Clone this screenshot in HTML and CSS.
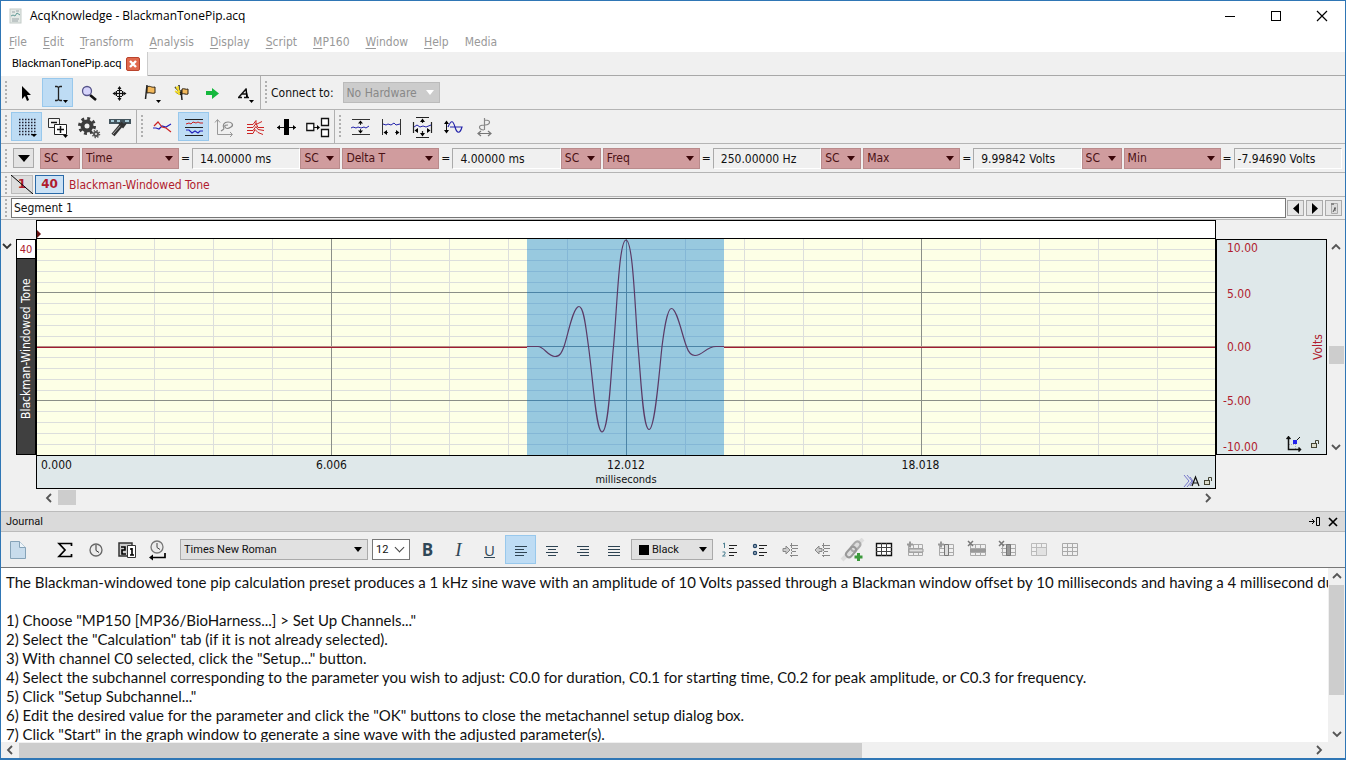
FILE: index.html
```
<!DOCTYPE html>
<html lang="en">
<head>
<meta charset="utf-8">
<title>AcqKnowledge - BlackmanTonePip.acq</title>
<link rel="stylesheet" href="styles.css">
</head>
<body>
<div class="window">
  <header class="titlebar">
    <svg class="app-icon" width="14" height="16" viewBox="0 0 14 16"><rect x="1" y="1" width="11" height="14" fill="#e4e9e6" stroke="#c3cbc8"/><path d="M3 4h3M7 3h3M3 11h7M3 13h6" stroke="#9aa5a8"/><path d="M2 8l2-1 2 1 2-3 3 2" fill="none" stroke="#5f9a96"/></svg>
    <h1 class="title">AcqKnowledge - BlackmanTonePip.acq</h1>
    <button class="win-btn" aria-label="Minimize"><svg width="12" height="12"><path d="M1 6.500h10" stroke="#000"/></svg></button>
    <button class="win-btn" aria-label="Maximize"><svg width="12" height="12"><rect x="1.500" y="1.500" width="9" height="9" fill="none" stroke="#000"/></svg></button>
    <button class="win-btn" aria-label="Close"><svg width="12" height="12"><path d="M1 1l10 10M11 1L1 11" stroke="#000" stroke-width="1.200"/></svg></button>
  </header>
  <nav class="menubar">
    <button><u>F</u>ile</button><button><u>E</u>dit</button><button><u>T</u>ransform</button><button><u>A</u>nalysis</button><button><u>D</u>isplay</button><button><u>S</u>cript</button><button><u>M</u>P160</button><button><u>W</u>indow</button><button><u>H</u>elp</button><button>Media</button>
  </nav>
  <div class="tabs">
    <div class="tab"><span>BlackmanTonePip.acq</span><button class="tab-close" aria-label="Close tab"><svg width="14" height="14"><rect x=".5" y=".5" width="13" height="13" rx="1.500" fill="#e0694d" stroke="#b9432c"/><path d="M4 4l6 6M10 4l-6 6" stroke="#fff" stroke-width="2.400"/></svg></button></div>
  </div>

  <div class="toolbar">
    <div class="group">
      <i class="grip"></i>
      <button class="tool" aria-label="Select"><svg width="24" height="24"><path d="M7 5v13l3-3 2 5 2-1-2-5h4z" fill="#000"/></svg></button>
      <button class="tool on" aria-label="I-beam"><svg width="24" height="24"><path d="M9 5.500h2l1.500 1 1.500-1h2M12.500 6v13M9 19.500h2l1.500-1 1.500 1h2" fill="none" stroke="#222" stroke-width="1.300"/><path d="M17 19h5l-2.500 3z" fill="#000"/></svg></button>
      <button class="tool" aria-label="Zoom"><svg width="24" height="24"><path d="M13 14l6 5" stroke="#111" stroke-width="2.600"/><circle cx="10" cy="10" r="4.500" fill="#d6d4fb" stroke="#555389" stroke-width="1.300"/></svg></button>
      <button class="tool" aria-label="Grid align"><svg width="24" height="24"><path d="M11.500 6v13M5 12.500h13M8.500 10v5M14.500 10v5M9 9.500h5M9 15.500h5" stroke="#111" stroke-width="1.200"/><path d="M11.500 5l2 3h-4zM11.500 20l2-3h-4zM4.500 12.500l3-2v4zM18.500 12.500l-3-2v4z" fill="#111"/></svg></button>
      <button class="tool" aria-label="Event"><svg width="24" height="24"><path d="M8 6c3-2 4 1 8 0v6c-3 1-5-1-8 0z" fill="#f3b95c" stroke="#2c2112"/><path d="M8 4L6.500 18" stroke="#222" stroke-width="1.500"/><path d="M17 19h5l-2.500 3z" fill="#000"/></svg></button>
      <button class="tool" aria-label="Event marker"><svg width="24" height="24"><path d="M5 6l6 6M9 4v6l3 2M6 11l6 3M12 19l-1-10" stroke="#222" stroke-width="1.500" fill="none"/><path d="M6 6l4 5M8 5l1 9M5 10l5 3" stroke="#f5dd29" stroke-width="1.500"/><path d="M12 8c2-1 4 1 6 0v5c-2 1-4-1-6 0z" fill="#f3b95c" stroke="#2c2112"/></svg></button>
      <button class="tool" aria-label="Go"><svg width="24" height="24"><path d="M5 10h6V7l7 5.500-7 5.500v-4H5z" fill="#15b83d"/></svg></button>
      <button class="tool" aria-label="Annotate"><svg width="24" height="24"><path d="M6 16.500h4M12 16.500h5M7 16l7.500-8.500M14 8l1 8M10 13h5" stroke="#111" fill="none" stroke-width="1.500"/><path d="M14 7l2 9h-2z"/><path d="M17 19h5l-2.500 3z"/></svg></button>
    </div>
    <div class="group">
      <i class="grip"></i>
      <label class="connect" for="hw">Connect to:</label>
      <span class="combo combo-off"><select id="hw" disabled><option>No Hardware</option></select></span>
    </div>
  </div>

  <div class="toolbar">
    <div class="group">
      <i class="grip"></i>
      <button class="tool on" aria-label="Grid"><svg width="24" height="24"><path d="M4 4.500h17M4 7.500h17M4 10.500h17M4 13.500h17M4 16.500h17M4 19.500h17" stroke="#223" stroke-width="1.500" stroke-dasharray="1.500 1.500" fill="none"/><path d="M16 19h6l-3 3z"/></svg></button>
      <button class="tool" aria-label="Overlap"><svg width="24" height="24"><path d="M2.500 3.500h11v9h-11z" fill="#f4f4f4" stroke="#333"/><path d="M8.500 9.500h12v10h-12z" fill="#fff" stroke="#222"/><path d="M5 7.500h6M11 14.500h7M14.500 11v7" stroke="#111" stroke-width="1.500"/><path d="M17 20h5l-2.500 3z"/></svg></button>
      <button class="tool" aria-label="Settings"><svg width="26" height="24"><circle cx="11" cy="11" r="4.500" fill="none" stroke="#3c3c3c" stroke-width="4"/><circle cx="11" cy="11" r="7.500" fill="none" stroke="#3c3c3c" stroke-width="3" stroke-dasharray="2.900 2.990"/><circle cx="20" cy="19" r="2" fill="none" stroke="#555" stroke-width="2"/><circle cx="20" cy="19" r="3.500" fill="none" stroke="#555" stroke-width="1.500" stroke-dasharray="1.300 1.450"/></svg></button>
      <button class="tool" aria-label="Tools"><svg width="26" height="24"><path d="M2 4h22v5H2z" fill="#43545d"/><path d="M4 5h3v2H4zM10 5h3v2h-3zM18 5h4v2h-4z" fill="#a8cbd8"/><path d="M6 20L16 8" stroke="#333" stroke-width="4"/><path d="M6 19l8-9" stroke="#aaa"/><path d="M12 8l4 4 3-4" fill="none" stroke="#333" stroke-width="2"/></svg></button>
    </div>
    <div class="group">
      <i class="grip"></i>
      <button class="tool" aria-label="Overlay"><svg width="24" height="24"><path d="M2 13h3l3 1 3-3 4 1 5-3" fill="none" stroke="#22b" stroke-width="1.200"/><path d="M3 11l4-4 4 5 4 1 5 4" fill="none" stroke="#c22" stroke-width="1.200"/></svg></button>
      <button class="tool on" aria-label="Stacked"><svg width="24" height="24"><path d="M3 4.500h18M3 12.500h18M3 20.500h18" stroke="#222" stroke-width="1.200"/><path d="M4 9l3-1 2 1 2-2 3 1 2-1 2 1h3" fill="none" stroke="#c22"/><path d="M4 15h3l3 3 3-2 3 2 2-2h3" fill="none" stroke="#22b" stroke-width="1.200"/></svg></button>
      <button class="tool" aria-label="X/Y"><svg width="24" height="24"><path d="M4.500 5v14.500H19M2 7.500l2.500-3 2.500 3M17 17l2.500 2.500L17 22" fill="none" stroke="#999"/><path d="M8 16l3-2M11 14c-2-4 0-7 4-7s6 3 3 5-5 2-6 0 1-2 3-2" fill="none" stroke="#888" stroke-width="1.200"/></svg></button>
      <button class="tool" aria-label="Compare"><svg width="24" height="24"><path d="M3 9.500h6l3-4v4l6-3M3 12.500h6l3-4 2 4h6M3 15.500h6l3-4 2 3 6 1M3 18.500h6l2-4 3 3 5 2" fill="none" stroke="#c22"/></svg></button>
      <button class="tool" aria-label="Fit column"><svg width="24" height="24"><path d="M9 4h5v16H9z"/><path d="M2 12.500h7M14 12.500h7" stroke="#111"/><path d="M2 12.500l3-2.500v5zM21 12.500l-3-2.500v5z"/></svg></button>
      <button class="tool" aria-label="Split"><svg width="24" height="24"><path d="M.8 8.500h7v7h-7zM15.500 3.500h7v7h-7zM15.500 14.500h7v7h-7z" fill="#fff" stroke="#111" stroke-width="1.300"/><path d="M8 12.500h4" stroke="#111"/><path d="M11 10l3 2.500-3 2.500z"/></svg></button>
    </div>
    <div class="group">
      <i class="grip"></i>
      <button class="tool" aria-label="Autoscale vertical"><svg width="24" height="24"><path d="M3 4.500h18M3 19.500h18M11.500 7v3M11.500 14v3" stroke="#333"/><path d="M9 8.500l2.500-3 2.500 3zM9 15.500l2.500 3 2.500-3z"/><path d="M2 13l2-1 3 1 2-1 3 1 3-1 2 1 3-2" fill="none" stroke="#22a"/></svg></button>
      <button class="tool" aria-label="Autoscale horizontal"><svg width="24" height="24"><path d="M2.500 4v16M20.500 4v16M5 17.500h3M15 17.500h3" stroke="#333"/><path d="M7 15l-3.500 2.500L7 20zM16 15l3.500 2.500L16 20z"/><path d="M3 9l3 1 2-1 3 1 3-2 2 2 4-1" fill="none" stroke="#22a"/></svg></button>
      <button class="tool" aria-label="Autoscale both"><svg width="24" height="24"><path d="M5 2.500h13M5 22.500h13M2.500 7v11M20.500 7v11M11.500 5v3M11.500 16v4" stroke="#222" stroke-width="1.200"/><path d="M9 7l2.500-3.500L14 7zM9 18l2.500 3.500L14 18zM7 13l-3.500 2.500L7 18zM16 13l3.500 2.500L16 18z"/><path d="M3 12l3-2 3 2 3-1 3 1 5-2" fill="none" stroke="#22a"/></svg></button>
      <button class="tool" aria-label="Scale wave"><svg width="24" height="24"><path d="M4.500 7v10" stroke="#111"/><path d="M2 9l2.500-3.500L7 9zM2 15l2.500 3.500L7 15z"/><path d="M6 12c3-7 5-7 7 0s5 7 7 0H8" fill="none" stroke="#22a" stroke-width="1.200"/></svg></button>
      <button class="tool" aria-label="Rotate"><svg width="24" height="24"><path d="M11.500 3v12M11 15c-6-1-6-5 0-5M12 5c6 0 6 4 0 5" fill="none" stroke="#888" stroke-width="1.200"/><path d="M6 18.500h12M8 16l-3 2.500L8 21M15 16l3 2.500-3 2.500" fill="none" stroke="#777" stroke-width="1.200"/></svg></button>
    </div>
  </div>

  <div class="measures">
    <i class="grip"></i>
    <button class="drop" aria-label="Measurement options"><i class="tri"></i></button>
    <div class="measure-list">
      <div class="measure"><span class="combo red sc"><select aria-label="Channel"><option>SC</option></select></span><span class="combo red"><select aria-label="Measurement"><option>Time</option></select></span><b>=</b><output>14.00000 ms</output></div>
      <div class="measure"><span class="combo red sc"><select aria-label="Channel"><option>SC</option></select></span><span class="combo red"><select aria-label="Measurement"><option>Delta T</option></select></span><b>=</b><output>4.00000 ms</output></div>
      <div class="measure"><span class="combo red sc"><select aria-label="Channel"><option>SC</option></select></span><span class="combo red"><select aria-label="Measurement"><option>Freq</option></select></span><b>=</b><output>250.00000 Hz</output></div>
      <div class="measure"><span class="combo red sc"><select aria-label="Channel"><option>SC</option></select></span><span class="combo red"><select aria-label="Measurement"><option>Max</option></select></span><b>=</b><output>9.99842 Volts</output></div>
      <div class="measure"><span class="combo red sc"><select aria-label="Channel"><option>SC</option></select></span><span class="combo red"><select aria-label="Measurement"><option>Min</option></select></span><b>=</b><output class="tight">-7.94690 Volts</output></div>
    </div>
  </div>

  <div class="channels">
    <i class="grip"></i>
    <button class="chan">1<svg class="slash" viewBox="0 0 22 19" preserveAspectRatio="none"><path d="M0 0l22 19" stroke="#000"/></svg></button>
    <button class="chan chan-on">40</button>
    <span class="chan-name">Blackman-Windowed Tone</span>
  </div>

  <div class="segment">
    <i class="grip"></i>
    <input type="text" aria-label="Segment" value="Segment 1">
    <button class="seg-btn" aria-label="Previous"><svg width="12" height="14"><path d="M9 2v11L3 7.500z"/></svg></button>
    <button class="seg-btn" aria-label="Next"><svg width="12" height="14"><path d="M3 2v11l6-5.500z"/></svg></button>
    <button class="seg-btn" aria-label="Segment options"><svg width="12" height="14"><path d="M3.500 2.500h6v10h-6z" fill="#dcdcdc" stroke="#aaa"/><path d="M3 2h3v2H3z" fill="#888"/><path d="M5 11l2-4v3M6 7h2" fill="none" stroke="#555"/></svg></button>
  </div>

  <main class="graph">
    <div class="marker-bar"><svg width="5" height="9"><path d="M0 1l4 4-4 4z" fill="#611"/></svg></div>
    <button class="collapse" aria-label="Collapse"><svg width="10" height="8"><path d="M1 2l4 4 4-4" fill="none" stroke="#333" stroke-width="1.800"/></svg></button>
    <div class="chan-label"><span class="chan-num">40</span><span class="chan-title">Blackman-Windowed Tone</span></div>
    <div class="plot">
      <svg viewBox="1 0 1178 216" preserveAspectRatio="none">
        <rect width="1180" height="216" fill="#fdffe6"/>
        <g stroke="#dcdedc" shape-rendering="crispEdges">
          <path d="M0 10.500h1180M0 21.500h1180M0 32.500h1180M0 43.500h1180M0 64.500h1180M0 75.500h1180M0 86.500h1180M0 97.500h1180M0 118.500h1180M0 129.500h1180M0 140.500h1180M0 151.500h1180M0 172.500h1180M0 183.500h1180M0 194.500h1180M0 205.500h1180"/>
          <path d="M59.500 0v216M118.500 0v216M177.500 0v216M236.500 0v216M354.500 0v216M413.500 0v216M472.500 0v216M531.500 0v216M649.500 0v216M708.500 0v216M767.500 0v216M826.500 0v216M944.500 0v216M1003.500 0v216M1062.500 0v216M1121.500 0v216"/>
        </g>
        <path d="M0 53.500h1180M0 161.500h1180M295.500 0v216M590.500 0v216M885.500 0v216" stroke="#8b8f88" shape-rendering="crispEdges"/>
        <rect x="491" width="197" height="216" fill="#98c9df"/>
        <path d="M491 10.500h197M491 21.500h197M491 32.500h197M491 43.500h197M491 64.500h197M491 75.500h197M491 86.500h197M491 97.500h197M491 118.500h197M491 129.500h197M491 140.500h197M491 151.500h197M491 172.500h197M491 183.500h197M491 194.500h197M491 205.500h197M531.500 0v216M649.500 0v216" stroke="#84b7d6" shape-rendering="crispEdges"/>
        <path d="M491 53.500h197M491 107.500h197M491 161.500h197M590.500 0v216" stroke="#4c84a6" shape-rendering="crispEdges"/>
        <path d="M0 107h491v1H0zM688 107h492v1H688z" fill="#b58a84"/>
        <path d="M0 108h491v1H0zM688 108h492v1H688z" fill="#a01c30"/>
        <path d="M491 107.500H502C508 107.500 512 117.500 519 117.500C524 117.500 526 113 528 107.500C532 96 537 67.500 543 67.500C548 67.500 550 90 552.500 107.500C557 140 560 193 566 193C573 193 575 130 577.500 107.500C581 70 583 1 590 1C597 1 599 70 602 107.500C605 140 607 190.500 613 190.500C619 190.500 623 135 626 107.500C628 92 631 69.500 635.500 69.500C641 69.500 646 96 650.500 107.500C652 112 655 116.500 659 116.500C667 116.500 670 107.500 680 107.500H688" fill="none" stroke="#5b3a66" stroke-width="1.200"/>
      </svg>
    </div>
    <div class="volts">
      <span>10.00</span><span>5.00</span><span>0.00</span><span class="neg">-5.00</span><span class="neg">-10.00</span>
      <em class="unit">Volts</em>
      <div class="axis-icons"><svg width="16" height="16"><path d="M9 6L14 1" stroke="#111"/><path d="M3 8.500h5M9.500 8v6" stroke="#aab" stroke-dasharray="1 1"/><path d="M2.500 0v13.500H15M.5 3l2-2 2 2M12.500 11.500l2 2-2 2" stroke="#111" stroke-width="1.500" fill="none"/><rect x="7" y="4" width="4" height="4" fill="#22e"/></svg><svg width="10" height="10"><rect x="1.500" y="4.500" width="5" height="4" fill="#ddc" stroke="#443"/><path d="M5.500 4V1.500h3V5" fill="none" stroke="#443"/></svg></div>
    </div>
    <div class="vscroll"><svg width="10" height="8"><path d="M1 6l4-4 4 4" fill="none" stroke="#555" stroke-width="1.800"/></svg><i class="thumb"></i><svg width="10" height="8"><path d="M1 2l4 4 4-4" fill="none" stroke="#555" stroke-width="1.800"/></svg></div>
    <div class="time">
      <span>0.000</span><span>6.006</span><span>12.012</span><span>18.018</span>
      <em>milliseconds</em>
      <div class="time-icons"><svg width="18" height="14"><path d="M1 1l5 6-5 6M4 1l5 6-5 6M7 3l3 4-3 5" fill="none" stroke="#7777cc"/><path d="M9 12l3.500-9 3.500 9M10 9h5" fill="none" stroke="#111" stroke-width="1.200"/></svg><svg width="10" height="10"><rect x="1.500" y="4.500" width="5" height="4" fill="#ddc" stroke="#443"/><path d="M5.500 4V1.500h3V5" fill="none" stroke="#443"/></svg></div>
    </div>
    <div class="hscroll"><svg width="8" height="10"><path d="M6 1L2 5l4 4" fill="none" stroke="#555" stroke-width="1.800"/></svg><i class="thumb"></i><svg class="end" width="8" height="10"><path d="M2 1l4 4-4 4" fill="none" stroke="#555" stroke-width="1.800"/></svg></div>
  </main>

  <section class="journal">
    <header class="journal-head"><h2>Journal</h2><button aria-label="Dock"><svg width="12" height="11"><path d="M0 5.500h5M3 3l2.500 2.500L3 8" fill="none" stroke="#000"/><path d="M7.500 1.500h3v8h-3z" fill="none" stroke="#000"/></svg></button><button aria-label="Close journal"><svg width="10" height="10"><path d="M1 1l8 8M9 1L1 9" stroke="#000" stroke-width="1.700"/></svg></button></header>
    <div class="journal-tools">
      <button class="tool first" aria-label="New"><svg width="24" height="24"><path d="M4.500 3.500h9l6 6v11h-15z" fill="#c8dcec" stroke="#86a3b8"/><path d="M13.500 3.500v6h6" fill="#eef5fa" stroke="#86a3b8"/></svg></button>
      <button class="tool" aria-label="Sum"><svg width="24" height="24"><path d="M18.500 8V5.500H6L12 12l-6 6.500h12.500V16" fill="none" stroke="#000" stroke-width="1.700"/></svg></button>
      <button class="tool" aria-label="Time"><svg width="24" height="24"><circle cx="12" cy="12" r="6" fill="#ececec" stroke="#666" stroke-width="1.300"/><path d="M12 7v5.500l3 2" fill="none" stroke="#333"/></svg></button>
      <button class="tool" aria-label="Date"><svg width="24" height="24"><path d="M4 5h13v13H4z" fill="#ccc" stroke="#333" stroke-width="1.500"/><path d="M12.500 7.500h8v12h-8z" fill="#fff" stroke="#333"/><path d="M6 9h4v3H7v4h4M17 10v7M15 17h4M15 11h2" fill="none" stroke="#000" stroke-width="1.600"/></svg></button>
      <button class="tool" aria-label="Insert time"><svg width="24" height="24"><circle cx="11" cy="9" r="6" fill="#ececec" stroke="#777" stroke-width="1.300"/><path d="M11 5v4.500l3 2" fill="none" stroke="#444"/><path d="M5 19.500h14V15" fill="none" stroke="#000" stroke-width="1.700"/><path d="M3 19.500l4-3v6z"/></svg></button>
      <span class="combo font-name"><select aria-label="Font"><option>Times New Roman</option></select></span>
      <span class="combo font-size"><select aria-label="Size"><option>12</option></select></span>
      <button class="tool" aria-label="Bold"><b class="fmt">B</b></button>
      <button class="tool" aria-label="Italic"><i class="fmt it">I</i></button>
      <button class="tool" aria-label="Underline"><u class="fmt un">U</u></button>
      <button class="tool on" aria-label="Align left"><svg width="24" height="24"><path d="M6 8.500h12M6 11.500h9M6 14.500h12M6 17.500h9" stroke="#2e4352"/></svg></button>
      <button class="tool" aria-label="Align center"><svg width="24" height="24"><path d="M6 8.500h12M8 11.500h8M6 14.500h12M8 17.500h8" stroke="#2e4352"/></svg></button>
      <button class="tool" aria-label="Align right"><svg width="24" height="24"><path d="M6 8.500h12M9 11.500h9M6 14.500h12M9 17.500h9" stroke="#2e4352"/></svg></button>
      <button class="tool" aria-label="Justify"><svg width="24" height="24"><path d="M6 8.500h12M6 11.500h12M6 14.500h12M6 17.500h12" stroke="#2e4352"/></svg></button>
      <span class="combo colour"><i class="swatch"></i><select aria-label="Text colour"><option>Black</option></select></span>
      <button class="tool" aria-label="Numbered list"><svg width="24" height="24"><path d="M6 6l1.500-1v5M5.500 14h2.500v2l-2.500 2h3" fill="none" stroke="#4d8092"/><path d="M12 7.500h8M12 10.500h5M12 14.500h8M12 17.500h5" stroke="#222"/></svg></button>
      <button class="tool" aria-label="Bulleted list"><svg width="24" height="24"><circle cx="7" cy="8" r="1.500" fill="#fff" stroke="#246" stroke-width="1.400"/><circle cx="7" cy="15" r="1.500" fill="#fff" stroke="#246" stroke-width="1.400"/><path d="M11 7.500h8M11 10.500h5M11 14.500h8M11 17.500h5" stroke="#222"/></svg></button>
      <button class="tool" aria-label="Indent"><svg width="24" height="24"><path d="M12.500 5v15" stroke="#888" stroke-dasharray="2 1"/><path d="M11 7.500h8M13 10.500h6M13 13.500h4M11 17.500h8" stroke="#888"/><path d="M4 10.500h3V8l4 4-4 4v-2.500H4z" fill="#ccc" stroke="#888"/></svg></button>
      <button class="tool" aria-label="Outdent"><svg width="24" height="24"><path d="M13.500 5v15" stroke="#888" stroke-dasharray="2 1"/><path d="M12 7.500h8M14 10.500h6M14 13.500h4M12 17.500h8" stroke="#888"/><path d="M12 10.500H9V8l-4 4 4 4v-2.500h3z" fill="#ccc" stroke="#888"/></svg></button>
      <button class="tool" aria-label="Link"><svg width="28" height="24"><path d="M3 22L24 1" stroke="#ddd" stroke-width="4"/><rect x="14" y="3" width="6" height="11" rx="3" transform="rotate(42 17 8)" fill="none" stroke="#aaa" stroke-width="2"/><rect x="9" y="8" width="6" height="12" rx="3" transform="rotate(42 12 14)" fill="none" stroke="#999" stroke-width="2"/><path d="M19.500 15v8M15.500 19h8" stroke="#3c9a3c" stroke-width="3"/></svg></button>
      <button class="tool" aria-label="Table"><svg width="24" height="24"><path d="M4.500 5.500h15v12h-15z" fill="#fff" stroke="#111" stroke-width="1.400"/><path d="M4 9.500h16M4 13.500h16M9.500 5v13M14.500 5v13" stroke="#444"/></svg></button>
      <button class="tool" aria-label="Insert row"><svg width="24" height="24"><path d="M5.500 6.500h14v11h-14zM5 10.500h15M5 14.500h15M10.500 6v12M15.500 6v12" fill="none" stroke="#aaa"/><path d="M6 11h14v3H6z" fill="#ddd" stroke="#999"/><path d="M4 6.500h6M7 3.500v6" stroke="#999" stroke-width="2"/></svg></button>
      <button class="tool" aria-label="Insert column"><svg width="24" height="24"><path d="M5.500 6.500h14v11h-14zM5 10.500h15M5 14.500h15" fill="none" stroke="#aaa"/><path d="M10.500 6.500h4v11h-4z" fill="#ddd" stroke="#777"/><path d="M4 6.500h6M7 3.500v6" stroke="#999" stroke-width="2"/></svg></button>
      <button class="tool" aria-label="Delete row"><svg width="24" height="24"><path d="M5.500 6.500h15v11h-15zM5 10.500h15M5 14.500h15M10.500 6v12M15.500 6v12" fill="none" stroke="#aaa"/><path d="M5 11h16v3H5z" fill="#999"/><path d="M3 3l5 5M8 3L3 8" stroke="#777" stroke-width="1.500"/></svg></button>
      <button class="tool" aria-label="Delete column"><svg width="24" height="24"><path d="M6.500 6.500h13v11h-13zM5 10.500h15M5 14.500h15" fill="none" stroke="#aaa"/><path d="M10.500 6.500h4v11h-4z" fill="#999" stroke="#777"/><path d="M3 3l5 5M8 3L3 8" stroke="#777" stroke-width="1.500"/></svg></button>
      <button class="tool" aria-label="Merge cells"><svg width="24" height="24"><path d="M4.500 5.500h15v12h-15zM4 9.500h16M4 13.500h5M9.500 5v13M14.500 5v4" fill="none" stroke="#bbb"/><path d="M10 10h9v7h-9z" fill="#e2e2e2"/></svg></button>
      <button class="tool" aria-label="Split cells"><svg width="24" height="24"><path d="M4.500 5.500h15v12h-15zM4 9.500h16M4 13.500h16M9.500 5v13M14.500 5v13" fill="none" stroke="#aaa"/></svg></button>
    </div>
    <div class="journal-body">
      <textarea aria-label="Journal text" wrap="off" spellcheck="false">The Blackman-windowed tone pip calculation preset produces a 1 kHz sine wave with an amplitude of 10 Volts passed through a Blackman window offset by 10 milliseconds and having a 4 millisecond duration.

1) Choose "MP150 [MP36/BioHarness...] > Set Up Channels..."
2) Select the "Calculation" tab (if it is not already selected).
3) With channel C0 selected, click the "Setup..." button.
4) Select the subchannel corresponding to the parameter you wish to adjust: C0.0 for duration, C0.1 for starting time, C0.2 for peak amplitude, or C0.3 for frequency.
5) Click "Setup Subchannel..."
6) Edit the desired value for the parameter and click the "OK" buttons to close the metachannel setup dialog box.
7) Click "Start" in the graph window to generate a sine wave with the adjusted parameter(s).</textarea>
      <div class="vscroll"><svg width="10" height="8"><path d="M1 6l4-4 4 4" fill="none" stroke="#555" stroke-width="1.800"/></svg><i class="thumb"></i><svg width="10" height="8"><path d="M1 2l4 4 4-4" fill="none" stroke="#555" stroke-width="1.800"/></svg></div>
      <div class="hscroll"><svg width="8" height="10"><path d="M6 1L2 5l4 4" fill="none" stroke="#555" stroke-width="1.800"/></svg><i class="thumb"></i><svg class="end" width="8" height="10"><path d="M2 1l4 4-4 4" fill="none" stroke="#555" stroke-width="1.800"/></svg></div>
    </div>
  </section>
</div>
</body>
</html>
```
FILE: styles.css
```
* { box-sizing: border-box; }
body { margin: 0; font: 12px/16px "DejaVu Sans Condensed", "DejaVu Sans", sans-serif; color: #111; }
button, select, input, textarea { font: inherit; color: inherit; margin: 0; padding: 0; border: 0; background: none; border-radius: 0; }
svg { display: block; flex: none; }
h1, h2 { margin: 0; font-weight: normal; }
em { font-style: normal; }

.window { display: flex; flex-direction: column; height: 100vh; border: 1px solid #2f76b5; border-bottom-width: 2px; background: #f0f0f0; overflow: hidden; }

.titlebar { display: flex; align-items: center; height: 30px; flex: none; padding-left: 8px; background: #fff; }
.title { flex: 1; margin-left: 7px; font: 12px/16px "Open Sans", sans-serif; color: #000; }
.win-btn { display: flex; justify-content: center; align-items: center; width: 46px; height: 30px; }

.menubar { display: flex; flex: none; gap: 16px; height: 21px; padding-left: 8px; background: #fff; color: #999; }
.menubar button { line-height: 20px; }
.menubar u { text-underline-offset: 2px; }

.tabs { display: flex; flex: none; height: 24px; border-bottom: 1px solid #a8a8a8; }
.tab { display: flex; align-items: center; gap: 5px; width: 147px; height: 24px; padding-left: 11px; background: #fff; border-right: 1px solid #ccc; font: 11px/16px Roboto, sans-serif; color: #000; }

.toolbar { display: flex; flex: none; height: 34px; border-bottom: 1px solid #b4b4b4; }
.group { display: flex; align-items: center; padding-right: 1px; border-right: 1px solid #b0b0b0; }
.group:last-child { border-right: 0; }
.grip { flex: none; width: 2px; height: 24px; margin: 0 4px; background: repeating-linear-gradient(#b0b0b0 0 2px, transparent 2px 4px); align-self: center; }
.segment .grip, .channels .grip, .measures .grip { height: 18px; }
.tool { display: flex; justify-content: center; align-items: center; flex: none; width: 31px; height: 29px; }
.tool.on { background: #bedcf4; border: 1px solid #98c8ec; }
.connect { margin-right: 9px; }

.combo { position: relative; display: flex; align-items: center; height: 21px; border: 1px solid #aaa; background: #e1e1e1; }
.combo select { flex: 1; min-width: 0; height: 100%; padding-left: 3px; appearance: none; opacity: 1; }
.combo::after { content: ""; position: absolute; right: 5px; top: 7px; border: 4px solid transparent; border-top: 5px solid #000; border-bottom: 0; pointer-events: none; }
.combo-off { width: 97px; background: #ccc; border-color: #bbb; color: #888; }
.combo-off::after { border-top-color: #fff; }

.measures { display: flex; align-items: center; flex: none; height: 29px; border-bottom: 1px solid #b4b4b4; }
.drop { display: flex; justify-content: center; align-items: center; width: 21px; height: 20px; margin: 0 6px 0 2px; border: 1px solid #aaa; background: #e3e3e3; }
.tri { border: 6px solid transparent; border-top: 7px solid #000; border-bottom: 0; }
.measure-list { display: grid; grid-template-columns: repeat(5, 1fr); flex: 1; margin-right: 3px; }
.measure { display: flex; align-items: center; }
.combo.red { flex: none; width: 97px; background: #d09c9e; border-color: #b98a8b; color: #4a1114; }
.combo.red::after { border-top-color: #3a0508; }
.combo.sc { width: 40px; margin-right: 2px; }
.measure b { width: 13px; text-align: center; font-weight: normal; }
.measure output { flex: 1; height: 21px; padding-left: 7px; line-height: 20px; border: 1px solid #aaa; border-right-color: #fff; border-bottom-color: #fff; white-space: nowrap; }
.measure output.tight { padding-left: 3px; }

.channels { display: flex; align-items: center; flex: none; height: 24px; border-bottom: 1px solid #b4b4b4; color: #b01c2e; }
.chan { position: relative; width: 22px; height: 19px; border: 1px solid #bbb; background: #ddd; font: bold 12px/17px "DejaVu Sans", sans-serif; }
.slash { position: absolute; left: -1px; top: -1px; width: 22px; height: 19px; }
.chan-on { width: 29px; margin-left: 2px; border-color: #2a6aa8; background: #cce2f5; }
.chan-name { margin-left: 5px; }

.segment { display: flex; align-items: center; flex: none; height: 23px; padding-right: 3px; border-bottom: 1px solid #b4b4b4; }
.segment input { flex: 1; height: 20px; padding-left: 2px; border: 1px solid #777; background: #fff; }
.seg-btn { display: flex; justify-content: center; align-items: center; width: 17px; height: 16px; margin-left: 1px; border: 1px solid #aaa; background: #e6e6e6; }
.seg-btn + .seg-btn { margin-left: 2px; }

.graph { display: grid; flex: none; grid-template-columns: 15px 20px minmax(0, 1fr) 111px 18px; grid-template-rows: 19px 216px 34px 22px; }
.marker-bar { grid-area: 1 / 3; display: flex; align-items: flex-end; border: 1px solid #000; background: #fff; }
.collapse { grid-area: 2 / 1; align-self: start; justify-self: start; padding: 3px 0 0 1px; }
.chan-label { grid-area: 2 / 2; display: flex; flex-direction: column; border: 1px solid #000; background: #404040; }
.chan-num { height: 19px; font-size: 11px; line-height: 19px; text-align: center; background: #fff; color: #b01c2e; border-bottom: 1px solid #000; }
.chan-title { flex: 1; writing-mode: vertical-rl; transform: rotate(180deg); text-align: center; line-height: 18px; color: #fff; padding-top: 16px; white-space: nowrap; }
.plot { grid-area: 2 / 3; border-left: 1px solid #000; border-right: 1px solid #000; }
.plot svg { width: 100%; height: 100%; }
.volts { position: relative; grid-area: 2 / 4; display: grid; grid-template-rows: 27fr 54fr 54fr 54fr 27fr; align-items: center; padding-left: 10px; border: 1px solid #000; background: #dfe8ea; color: #b01c2e; }
.volts > span:first-child { align-self: start; }
.volts .neg { margin-left: -4px; }
.volts > span:nth-child(5) { align-self: end; line-height: 14px; }
.unit { position: absolute; right: 0; top: 0; height: 100%; text-align: center; writing-mode: vertical-rl; transform: rotate(180deg); }
.axis-icons { position: absolute; right: 6px; bottom: 2px; display: flex; align-items: center; gap: 8px; }
.vscroll { display: flex; flex-direction: column; align-items: center; justify-content: space-between; padding: 4px 0; }
.graph .vscroll { grid-area: 2 / 5; }
.thumb { background: #cdcdcd; }
.graph .vscroll .thumb { width: 15px; height: 18px; margin-top: 16px; }
.time { position: relative; grid-area: 3 / 3; display: grid; grid-template-columns: 1fr 2fr 2fr 2fr 1fr; grid-template-rows: 18px 14px; border: 1px solid #000; background: #dfe8ea; text-align: center; line-height: 18px; }
.time span:first-child { text-align: left; padding-left: 4px; }
.time em { grid-area: 2 / 1 / 3 / 6; font-size: 11px; line-height: 12px; }
.time-icons { position: absolute; right: 2px; bottom: 0; display: flex; align-items: center; gap: 2px; }
.hscroll { display: flex; align-items: center; gap: 5px; }
.graph .hscroll { grid-area: 4 / 3; height: 17px; padding: 0 4px 0 9px; }
.graph .hscroll .thumb { width: 18px; height: 15px; }
.hscroll .end { margin-left: auto; }

.journal { display: flex; flex: 1; flex-direction: column; min-height: 0; }
.journal-head { display: flex; align-items: center; flex: none; gap: 7px; height: 21px; padding: 0 7px 0 5px; border: 1px solid #bbb; border-width: 1px 0; background: #dadada; font: 11px/16px Roboto, sans-serif; }
.journal-head h2 { flex: 1; font: inherit; }
.journal-tools { display: flex; align-items: center; flex: none; height: 36px; border-bottom: 1px solid #777; font: 11px/16px Roboto, sans-serif; }
.journal-tools .first { margin: 0 16px 0 1px; }
.font-name { width: 188px; margin: 0 4px 0 7px; }
.font-size { width: 38px; margin-right: 2px; background: #fff; border-color: #777; }
.font-size::after { top: 4px; right: 6px; width: 6px; height: 6px; border: solid #444; border-width: 0 1px 1px 0; transform: rotate(45deg); }
.fmt { font: bold 17px/20px "Open Sans", sans-serif; color: #2f4757; }
.fmt.it { font: italic 19px/20px "Liberation Serif", serif; }
.fmt.un { font-weight: normal; font-size: 15px; }
.colour { width: 82px; margin: 0 0 0 2px; }
.swatch { width: 10px; height: 10px; margin-left: 7px; background: #000; }
.journal-body { display: grid; flex: 1; min-height: 0; grid-template-columns: minmax(0, 1fr) 17px; grid-template-rows: minmax(0, 1fr) 16px; }
.journal-body textarea { display: block; width: 100%; height: 100%; padding: 5px 0 0 5px; resize: none; outline: 0; overflow: hidden; white-space: pre; background: #fff; font: 15px/19px Lato, sans-serif; color: #111; }
.journal-body .thumb { width: 15px; height: 110px; }
.journal-body .vscroll { justify-content: flex-start; gap: 5px; }
.journal-body .vscroll svg:last-child { margin-top: auto; }
.journal-body .hscroll { padding: 0 5px; }
.journal-body .hscroll .thumb { width: 64%; height: 15px; }
```
